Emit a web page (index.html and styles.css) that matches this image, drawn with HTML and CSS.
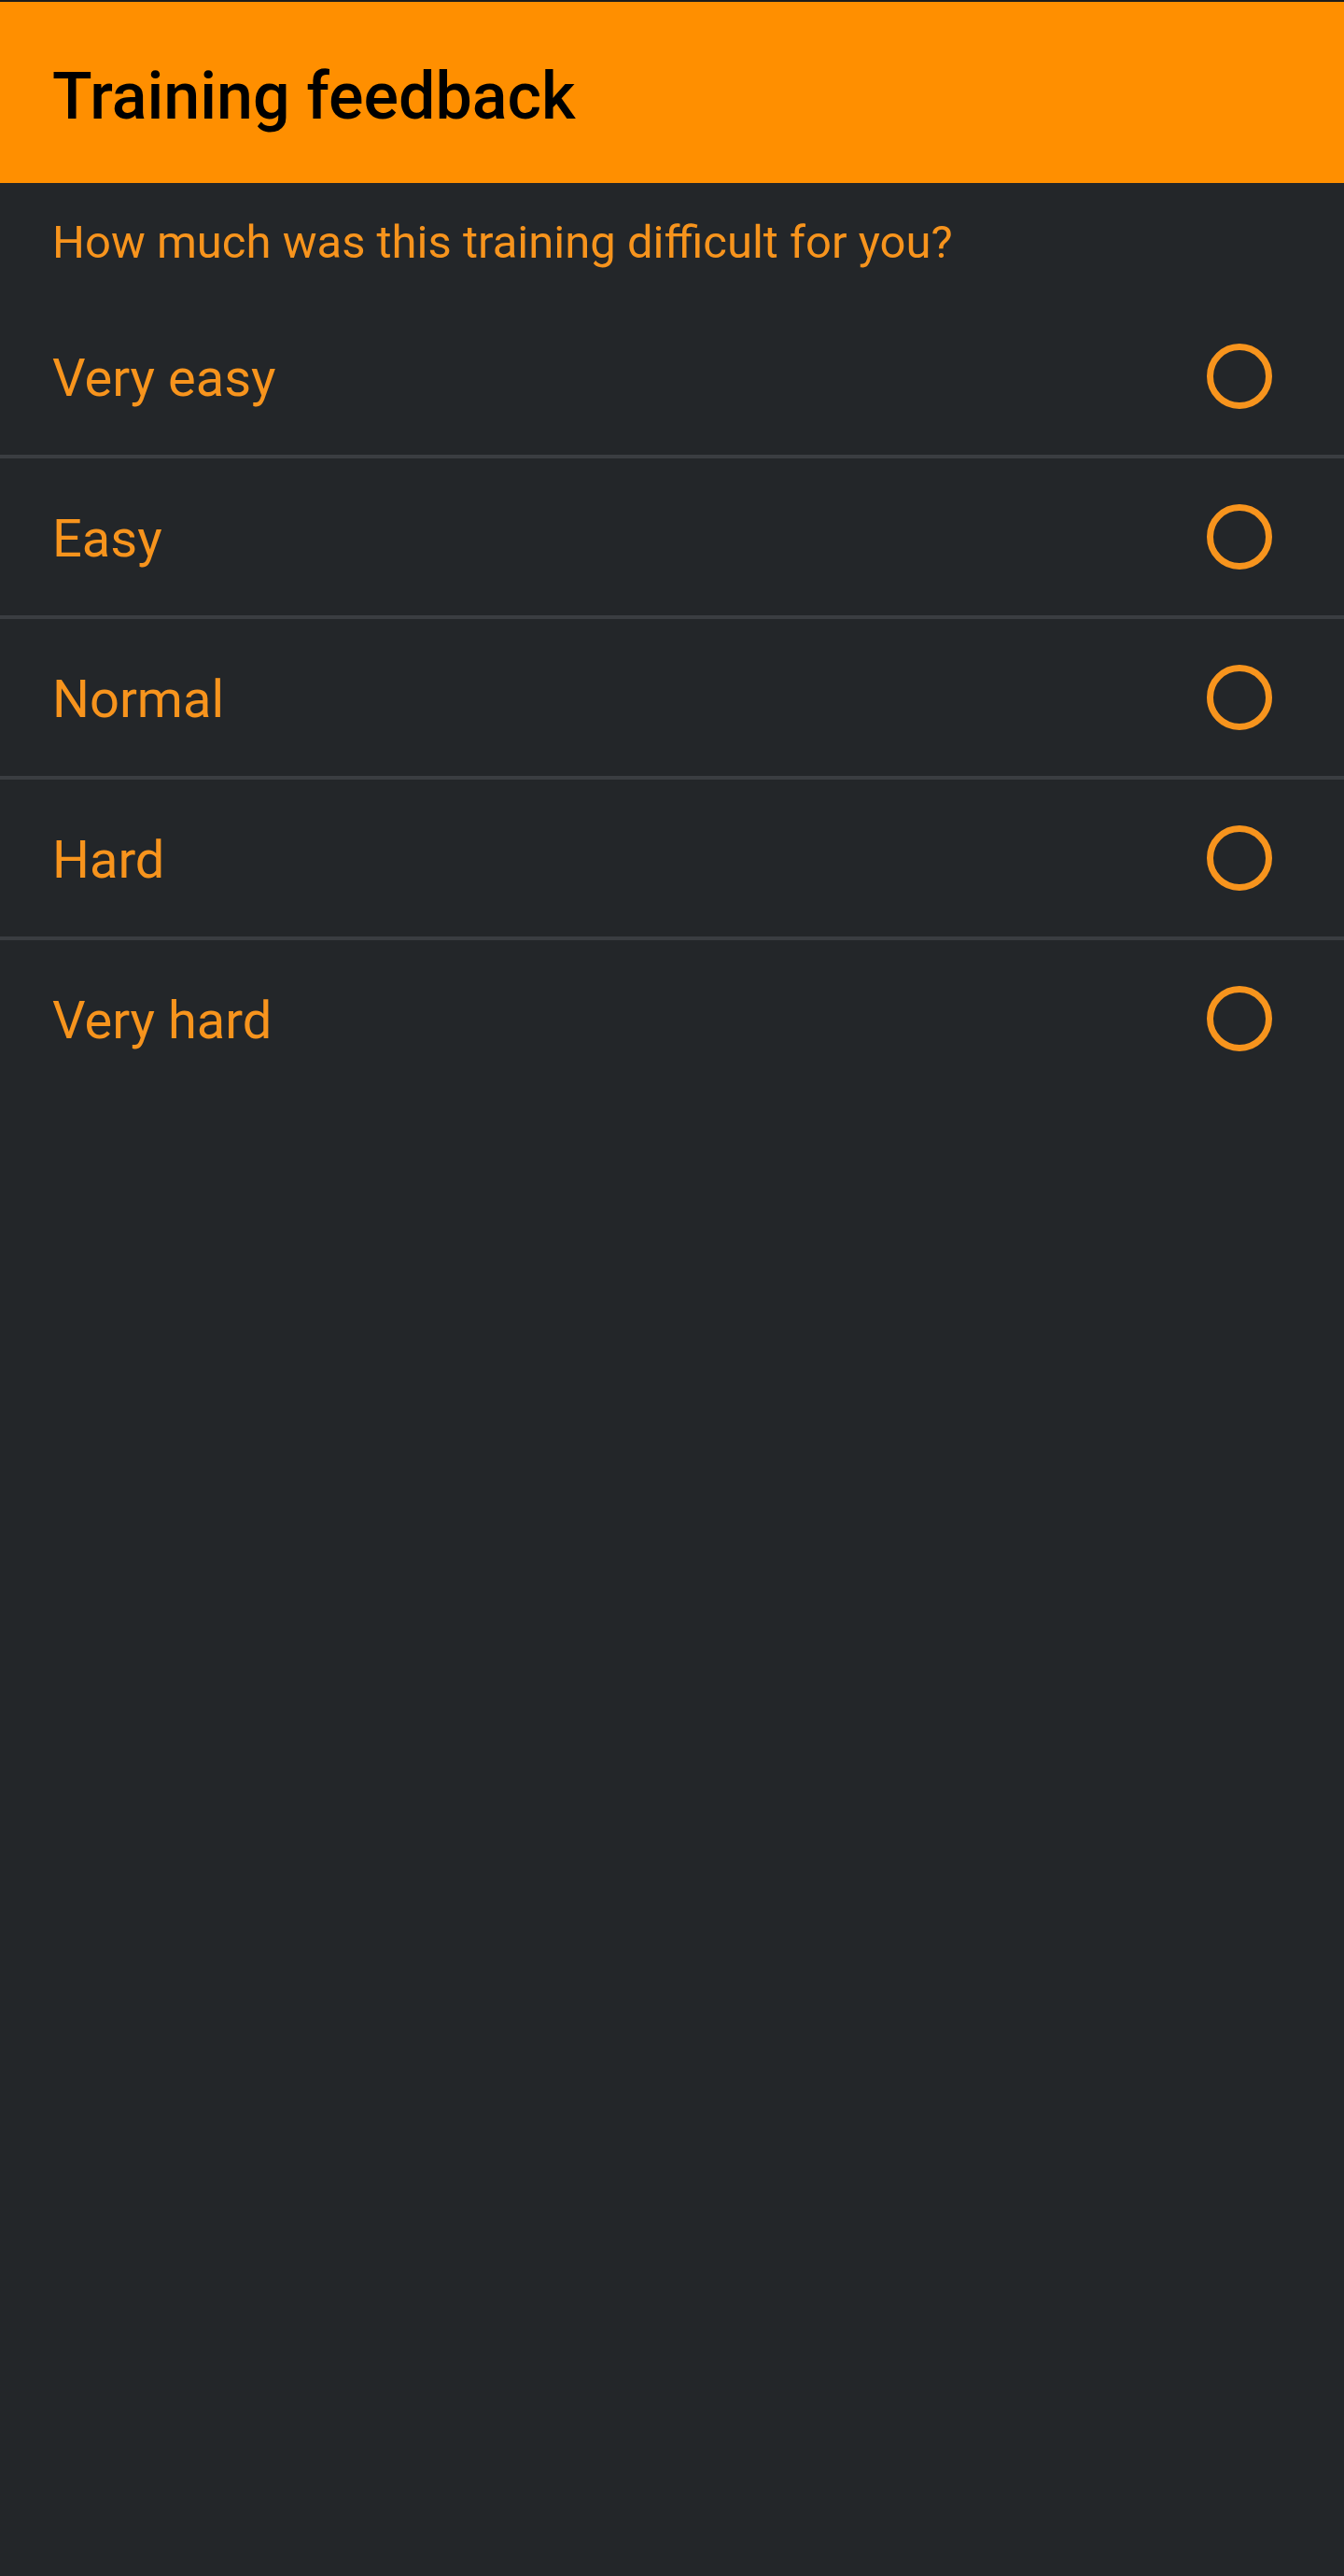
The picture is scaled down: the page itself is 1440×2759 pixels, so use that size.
FILE: index.html
```html
<!DOCTYPE html>
<html lang="en">
<head>
<meta charset="utf-8">
<title>Training feedback</title>
<link rel="stylesheet" href="styles.css">
</head>
<body>
<div class="screen">
  <header class="appbar">
    <h1 class="appbar-title">Training feedback</h1>
  </header>
  <p class="question">How much was this training difficult for you?</p>
  <ul class="options">
    <li class="option"><span class="option-label">Very easy</span><span class="radio"></span></li>
    <li class="option"><span class="option-label">Easy</span><span class="radio"></span></li>
    <li class="option"><span class="option-label">Normal</span><span class="radio"></span></li>
    <li class="option"><span class="option-label">Hard</span><span class="radio"></span></li>
    <li class="option"><span class="option-label">Very hard</span><span class="radio"></span></li>
  </ul>
</div>
</body>
</html>
```
FILE: styles.css
```css
html, body {
  margin: 0;
  padding: 0;
  background: #232629;
}
body {
  font-family: Roboto, "Liberation Sans", sans-serif;
}
.screen {
  min-height: 2759px;
  background: #232629;
  border-top: 2px solid #1c1c1c;
  box-sizing: border-box;
}
.appbar {
  background: #ff8f00;
  height: 194px;
  box-sizing: border-box;
  padding: 60px 56px 0;
}
.appbar-title {
  margin: 0;
  font-size: 70px;
  line-height: 82px;
  font-weight: 500;
  color: #000;
}
.question {
  margin: 0;
  padding: 35px 56px 31px;
  font-size: 49px;
  line-height: 57px;
  color: #f7941d;
}
.options {
  list-style: none;
  margin: 0;
  padding: 0;
}
.option {
  display: flex;
  align-items: center;
  justify-content: space-between;
  height: 168px;
  padding: 0 77px 0 56px;
  border-bottom: 4px solid #3a3d41;
}
.option:last-child {
  border-bottom: none;
}
.option-label {
  font-size: 56px;
  line-height: 66px;
  padding-top: 4px;
  color: #f7941d;
}
.radio {
  width: 70px;
  height: 70px;
  box-sizing: border-box;
  border: 7px solid #f7941d;
  border-radius: 50%;
}
```
